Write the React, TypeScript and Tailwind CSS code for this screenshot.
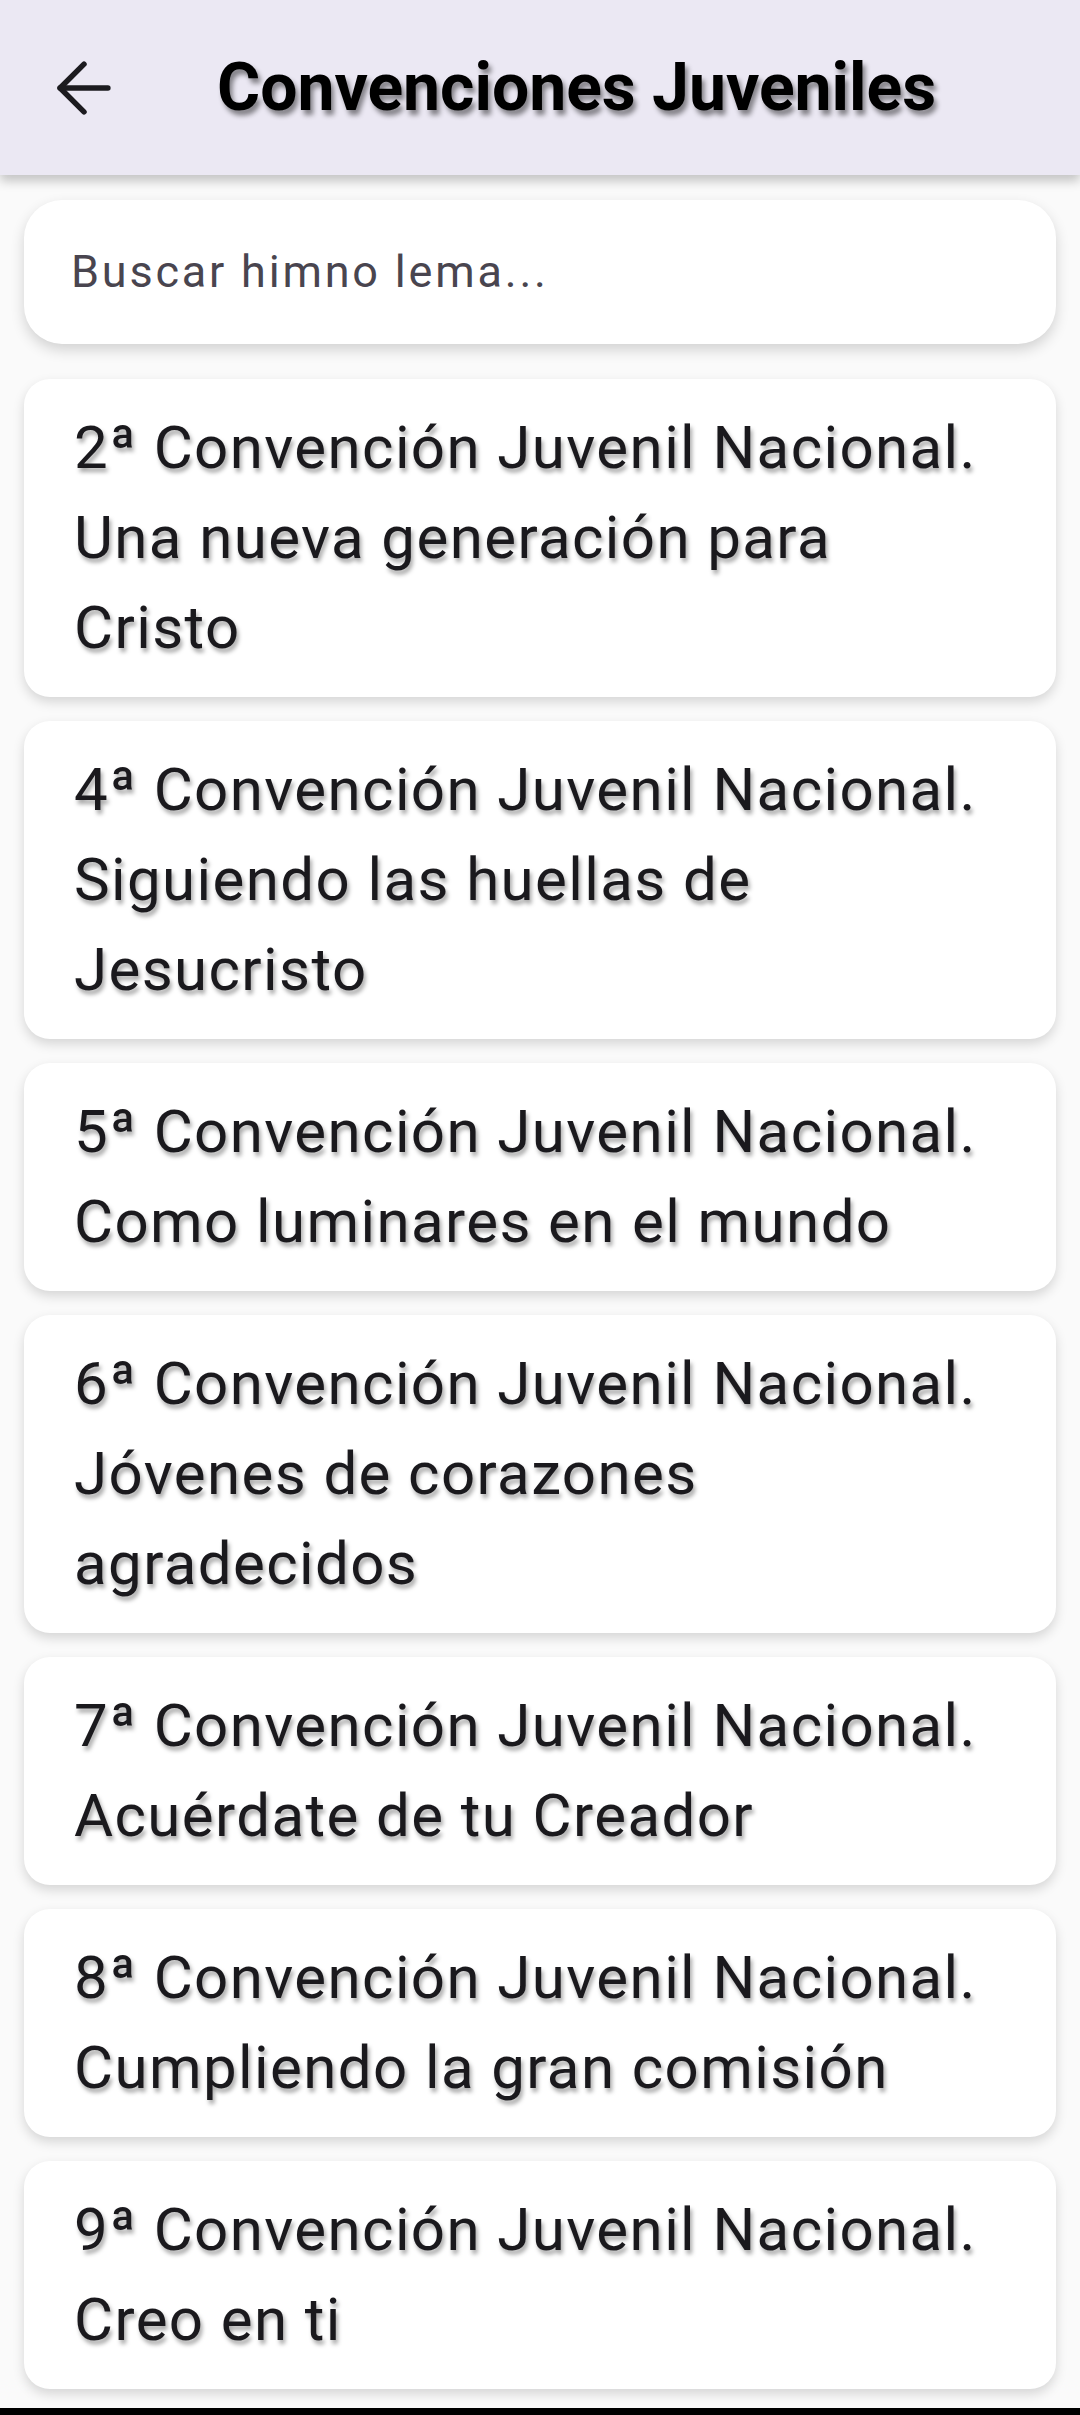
import { ArrowLeft } from 'lucide-react';

const convenciones = [
  '2ª Convención Juvenil Nacional. Una nueva generación para Cristo',
  '4ª Convención Juvenil Nacional. Siguiendo las huellas de Jesucristo',
  '5ª Convención Juvenil Nacional. Como luminares en el mundo',
  '6ª Convención Juvenil Nacional. Jóvenes de corazones agradecidos',
  '7ª Convención Juvenil Nacional. Acuérdate de tu Creador',
  '8ª Convención Juvenil Nacional. Cumpliendo la gran comisión',
  '9ª Convención Juvenil Nacional. Creo en ti',
];

export default function App() {
  return (
    <div className="flex h-[2415px] flex-col bg-[#fafafa] font-['Roboto',sans-serif] text-[#1a191d]">
      <header className="relative z-10 flex h-[175px] shrink-0 items-center bg-[#ebe8f3] shadow-[0_6px_10px_rgba(0,0,0,0.22)]">
        <button className="ml-[43px] flex h-[82px] w-[82px] items-center justify-center">
          <ArrowLeft size={82} strokeWidth={1.6} color="#1c1b1f" />
        </button>
        <h1 className="ml-[92px] text-[66px] font-bold text-black [text-shadow:3px_5px_5px_rgba(0,0,0,0.45)]">
          Convenciones Juveniles
        </h1>
      </header>

      <main className="flex flex-1 flex-col overflow-hidden px-[24px] pt-[25px]">
        <div className="flex h-[144px] shrink-0 items-center rounded-[38px] bg-white pl-[47px] shadow-[0_6px_14px_rgba(0,0,0,0.16)]">
          <span className="text-[45px] tracking-[2.8px] text-[#49454f]">Buscar himno lema...</span>
        </div>

        <div className="mt-[35px] flex flex-col gap-[24px]">
          {convenciones.map(c => (
            <div
              key={c}
              className="rounded-[26px] bg-white py-[24px] pl-[50px] pr-[61px] shadow-[0_5px_12px_rgba(0,0,0,0.15)]"
            >
              <p className="text-[60px] leading-[90px] tracking-[1.4px] [text-shadow:2px_4px_4px_rgba(0,0,0,0.35)]">{c}</p>
            </div>
          ))}
        </div>
      </main>
      <div className="h-[7px] shrink-0 bg-black" />
    </div>
  );
}
